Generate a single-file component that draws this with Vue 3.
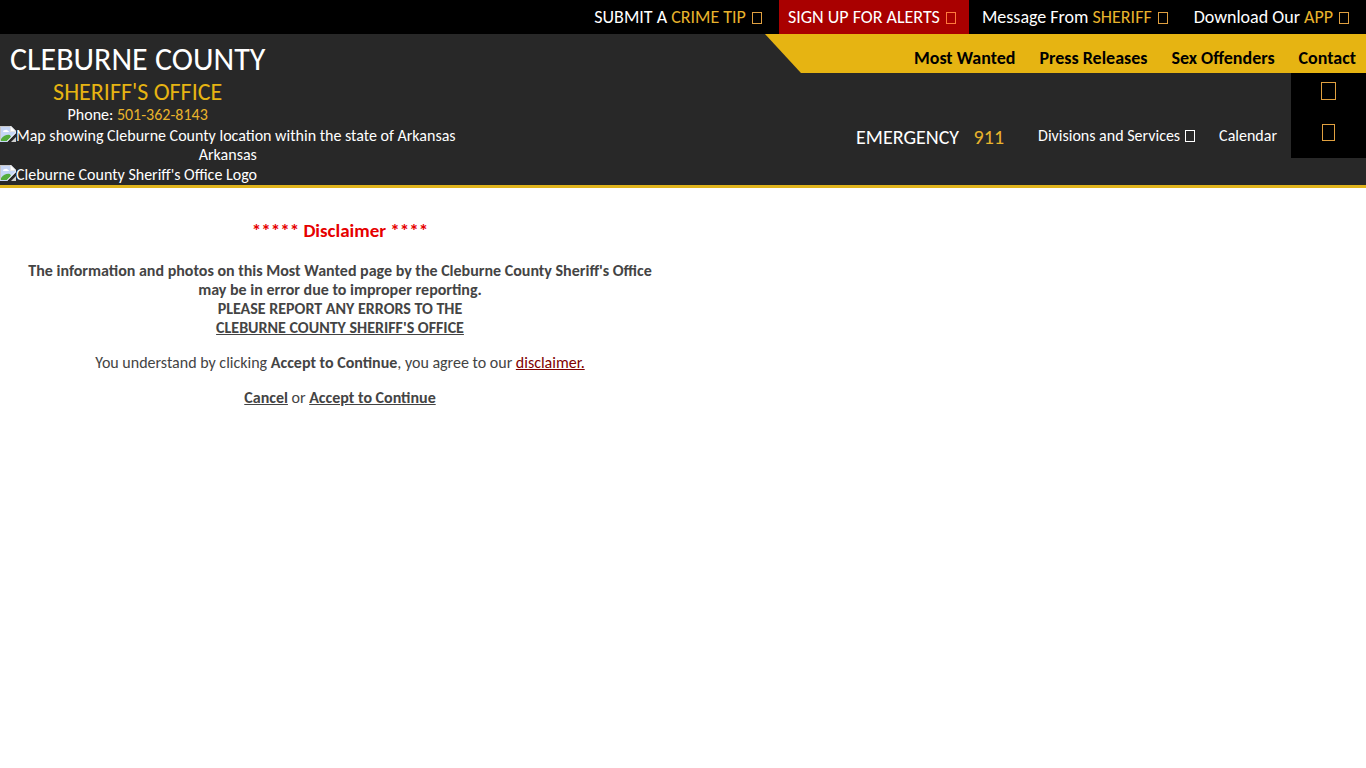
<template>
  <div class="page">
    <nav class="top-bar" aria-label="Quick links">
      <a
        v-for="item in quickLinks"
        :key="item.label"
        href="#"
        class="top-link"
        :class="{ alert: item.alert }"
      >{{ item.label }} <span class="gold">{{ item.accent }}<i class="glyph"></i></span></a>
    </nav>

    <header class="site-header">
      <div class="brand">
        <div class="brand-title">
          <h1>CLEBURNE COUNTY</h1>
          <h2>SHERIFF'S OFFICE</h2>
          <p>Phone: <a href="tel:501-362-8143" class="gold">501-362-8143</a></p>
        </div>
        <div v-for="pic in pictures" :key="pic.alt" class="picture">
          <div class="picture-alt">
            <svg width="16" height="16" viewBox="0 0 16 16" aria-hidden="true">
              <path d="M0 0h11l5 5v2L7 16H0z" fill="#c6d6f6" />
              <path d="M0 0h11v1H1v14H0z" fill="#c8c8c8" />
              <path d="M11 0l5 5v1h-6V0z" fill="#e4e4e4" />
              <path d="M11 1v4h4z" fill="#fff" />
              <path d="M3 6q0-2 2-2 2-1 3 1 1 0 1 1z" fill="#fff" />
              <path d="M1 15v-2q4-5 9-4l1 2-4 4z" fill="#54ad3c" />
              <path d="M7 15l9-9v1l-9 9z" fill="#fff" />
              <path d="M11 16l5-5v5z" fill="#d0d0d0" />
            </svg>
            <span>{{ pic.alt }}</span>
          </div>
          <div v-if="pic.caption" class="caption">{{ pic.caption }}</div>
        </div>
      </div>

      <div class="menus">
        <nav class="gold-nav" aria-label="Main">
          <a v-for="link in mainLinks" :key="link" href="#">{{ link }}</a>
        </nav>
        <div class="sub-row">
          <div class="emergency">EMERGENCY <span class="gold">911</span></div>
          <nav class="sub-nav" aria-label="Services">
            <a href="#">Divisions and Services<i class="glyph"></i></a>
            <a href="#">Calendar</a>
          </nav>
          <div class="social">
            <a href="#" aria-label="Facebook"><i class="glyph large"></i></a>
            <a href="#" aria-label="Search"><i class="glyph medium"></i></a>
          </div>
        </div>
      </div>
    </header>

    <main class="disclaimer">
      <h3>***** Disclaimer ****</h3>
      <p class="notice">
        The information and photos on this Most Wanted page by the Cleburne County Sheriff's Office<br>
        may be in error due to improper reporting.<br>
        PLEASE REPORT ANY ERRORS TO THE<br>
        <a href="#">CLEBURNE COUNTY SHERIFF'S OFFICE</a>
      </p>
      <p>
        You understand by clicking <b>Accept to Continue</b>, you agree to our
        <a href="#" class="terms">disclaimer.</a>
      </p>
      <p><a href="#"><b>Cancel</b></a> or <a href="#"><b>Accept to Continue</b></a></p>
    </main>
  </div>
</template>

<script setup>
const quickLinks = [
  { label: 'SUBMIT A', accent: 'CRIME TIP' },
  { label: 'SIGN UP FOR ALERTS', accent: '', alert: true },
  { label: 'Message From', accent: 'SHERIFF' },
  { label: 'Download Our', accent: 'APP' }
]

const mainLinks = ['Most Wanted', 'Press Releases', 'Sex Offenders', 'Contact']

const pictures = [
  { alt: 'Map showing Cleburne County location within the state of Arkansas', caption: 'Arkansas' },
  { alt: "Cleburne County Sheriff's Office Logo" }
]
</script>

<style>
body {
  margin: 0;
  background: #fff;
}
</style>

<style scoped>
.page {
  font-family: Calibri, Carlito, Lato, sans-serif;
  font-size: 16px;
  line-height: 19px;
  color: #444;
}
h1, h2, h3, p {
  margin: 0;
  font-weight: 400;
}
a {
  color: inherit;
}
.gold {
  color: #e8b32c;
}
.glyph {
  display: inline-block;
  box-sizing: border-box;
  width: 10px;
  height: 12px;
  margin-left: 6px;
  border: 1px solid #e0a040;
  vertical-align: -1px;
}

/* top bar */
.top-bar {
  display: flex;
  justify-content: flex-end;
  gap: 4px;
  padding-right: 4px;
  background: #000;
  color: #fff;
  font-size: 18px;
  line-height: 34px;
}
.top-link {
  padding: 0 13px 0 9px;
  text-decoration: none;
  white-space: nowrap;
}
.alert {
  background: #a90000;
}
.alert .glyph {
  margin-left: 2px;
  border-color: #ff7a3c;
}

/* header */
.site-header {
  display: flex;
  justify-content: space-between;
  border-bottom: 3px solid #e0b41c;
  background: #282828;
  color: #fff;
}
.brand {
  display: flex;
  flex-direction: column;
  align-items: flex-start;
}
.brand-title {
  padding: 8px 10px 0;
  text-align: center;
}
.brand-title h1 {
  font-size: 32px;
  line-height: 36px;
}
.brand-title h2 {
  color: #e6b412;
  font-size: 24px;
  line-height: 27px;
}
.brand-title a {
  text-decoration: none;
}
.brand-title p {
  line-height: 20px;
}
.picture {
  text-align: center;
}
.picture-alt {
  display: flex;
  line-height: 21px;
  white-space: nowrap;
}
.picture-alt svg {
  margin-top: 1px;
}
.caption {
  line-height: 18px;
}
.menus {
  display: flex;
  flex-direction: column;
  width: 44%;
}
.gold-nav {
  display: flex;
  justify-content: flex-end;
  gap: 24px;
  padding: 10px 10px 0 0;
  background: #e6b412;
  clip-path: polygon(0 0, 100% 0, 100% 100%, 36px 100%);
  color: #000;
  font-size: 18px;
  font-weight: 700;
  line-height: 29px;
  white-space: nowrap;
}
.gold-nav a,
.sub-nav a {
  text-decoration: none;
}
.sub-row {
  display: flex;
  justify-content: flex-end;
  white-space: nowrap;
}
.emergency {
  padding-top: 53px;
  margin-right: 34px;
  font-size: 20px;
  line-height: 22px;
}
.emergency .gold {
  margin-left: 10px;
}
.sub-nav {
  display: flex;
  gap: 24px;
  padding-top: 53px;
  margin-right: 14px;
}
.sub-nav .glyph {
  margin-left: 5px;
  border-color: #fff;
}
.social {
  display: flex;
  flex-direction: column;
  align-items: center;
  gap: 24px;
  box-sizing: border-box;
  width: 75px;
  height: 85px;
  padding-top: 9px;
  background: #000;
}
.social a {
  display: flex;
}
.social .glyph {
  margin: 0;
}
.glyph.large {
  width: 15px;
  height: 18px;
}
.glyph.medium {
  width: 13px;
  height: 17px;
}

/* disclaimer */
.disclaimer {
  box-sizing: border-box;
  max-width: 680px;
  padding: 32px 20px;
  text-align: center;
}
.disclaimer h3 {
  margin-bottom: 19px;
  color: #e60000;
  font-size: 19px;
  font-weight: 700;
  line-height: 22px;
}
.disclaimer p {
  margin-bottom: 16px;
}
.notice {
  font-weight: 700;
}
.terms {
  color: #800000;
}
</style>
